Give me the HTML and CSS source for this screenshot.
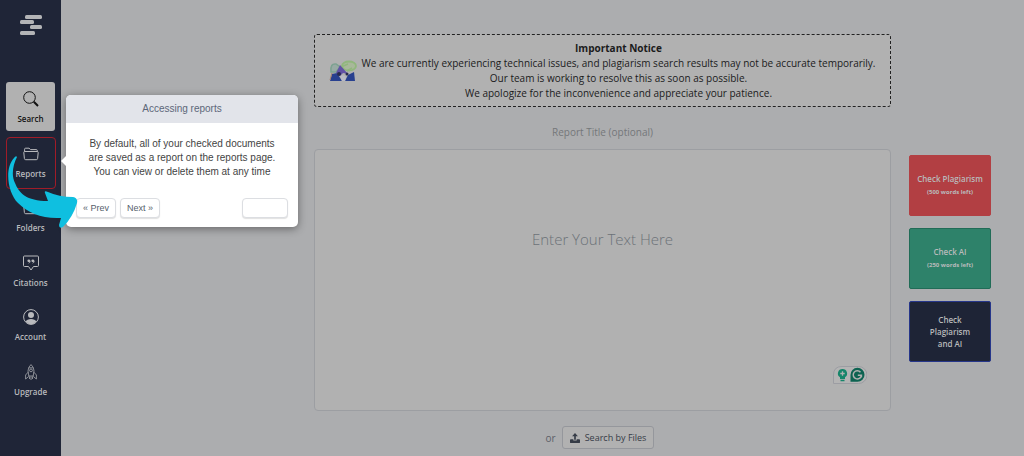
FILE: index.html
```html
<!DOCTYPE html>
<html lang="en">
<head>
<meta charset="utf-8">
<title>Plagiarism search</title>
<link rel="stylesheet" href="styles.css">
</head>
<body>
<div class="app">
  <aside class="sidebar">
    <svg class="logo" viewBox="0 0 24 22" aria-hidden="true">
      <rect x="6" y="1" width="17" height="4" rx="1.5"/><rect x="1" y="6" width="14" height="4" rx="1.5"/>
      <rect x="11" y="11" width="12" height="4" rx="1.5"/><rect x="1" y="17" width="15" height="4" rx="1.5"/>
    </svg>
    <nav class="nav">
      <a class="nav-item active" href="#"><svg viewBox="0 0 16 16"><circle cx="6.5" cy="6.5" r="5.8"/><path d="M10.8 10.8 15 15" stroke-width="2"/></svg><span>Search</span></a>
      <a class="nav-item highlighted" href="#"><svg viewBox="0 0 16 16"><path d="M1.6 5.5V3.2q0-1 1-1H6l1.6 1.4h5.7q1 0 1 1v1M1.7 5.5h12.6q1 0 .9 1l-.6 6q-.1 1.200-1.300 1.200H2.700q-1.200 0-1.300-1.200l-.6-6q-.1-1 .9-1z"/></svg><span>Reports</span></a>
      <a class="nav-item" href="#"><svg viewBox="0 0 16 16"><path d="M1.600 5.500V3.200q0-1 1-1H6l1.600 1.400h5.700q1 0 1 1v1M1.700 5.500h12.600q1 0 .9 1l-.6 6q-.1 1.200-1.300 1.200H2.700q-1.200 0-1.300-1.200l-.6-6q-.1-1 .9-1z"/></svg><span>Folders</span></a>
      <a class="nav-item" href="#"><svg viewBox="0 0 16 16"><path d="M1.500 1h13q1 0 1 1v8.500q0 1-1 1h-4L8 15l-2.500-3.500h-4q-1 0-1-1V2q0-1 1-1z"/><g class="solid"><circle cx="5.800" cy="5.800" r="1.400"/><circle cx="9.800" cy="5.800" r="1.400"/></g><path d="M7.100 5.800q0 1.800-1.300 2.500M11.100 5.800q0 1.800-1.300 2.500"/></svg><span>Citations</span></a>
      <a class="nav-item" href="#"><svg viewBox="0 0 16 16"><circle cx="8" cy="8" r="7.400"/><g class="solid"><circle cx="8" cy="6" r="3"/><path d="M2.600 12.600Q4 10 8 10t5.400 2.600Q11.200 15.300 8 15.300t-5.400-2.700z"/></g></svg><span>Account</span></a>
      <a class="nav-item" href="#"><svg class="thin" viewBox="0 0 16 16"><path d="M8 .6Q5 3 5 7l.8 5h4.400l.8-5q0-4-3-6.400zM6 3.800h4M5.100 8.200 2.600 11v4l3.200-2.600M10.900 8.200l2.500 2.800v4l-3.200-2.600M6.500 12.500v2.500M8 12.500V16M9.500 12.500v2.500"/><circle cx="8" cy="6.400" r="1.400"/></svg><span>Upgrade</span></a>
    </nav>
  </aside>

  <main class="main">
    <section class="content">
      <div class="notice">
        <svg class="notice-art" viewBox="0 0 28 22" aria-hidden="true">
          <path d="M2 12Q1 3 7 4l4 3-4 5z" fill="#98aaa4" stroke="#7da291" stroke-width="1.500"/>
          <ellipse cx="20" cy="6" rx="7" ry="4.500" fill="#a8b89a" stroke="#91b77d" stroke-width="1.800"/>
          <path d="M12 7l7-3M18 11l5-3" stroke="#91b77d" stroke-width="1.500"/>
          <path d="M1 21l2-7 5-1 5 8z" fill="#28408f"/><path d="M16 21l3-6 6-3 1 9z" fill="#28408f"/>
          <path d="M7 13l4-8 8 9-5-1-3 3z" fill="#6152a5"/><circle cx="10" cy="14" r="2" fill="#282a4d"/><circle cx="18" cy="14" r="1.500" fill="#282a4d"/>
          <path d="M11 16q4-2 6 1l-1 4h-3z" fill="#b9bac5"/><path d="M1 20l2-7" stroke="#a3806e"/>
        </svg>
        <div class="notice-text">
          <strong>Important Notice</strong>
          <p>We are currently experiencing technical issues, and plagiarism search results may not be accurate temporarily.</p>
          <p>Our team is working to resolve this as soon as possible.</p>
          <p>We apologize for the inconvenience and appreciate your patience.</p>
        </div>
      </div>
      <input class="report-title" type="text" aria-label="Report title" placeholder="Report Title (optional)">
      <div class="editor">
        <textarea class="editor-text" aria-label="Text to check" placeholder="Enter Your Text Here"></textarea>
        <div class="assistant">
          <svg viewBox="0 0 34 18" aria-hidden="true">
            <path class="assistant-frame" d="M.5 17.500V9Q.5.500 9 .500h16.500a8.500 8.500 0 0 1 0 17z"/>
            <path d="M9.500 3a4.500 4.500 0 0 0-2.500 8.300v1.700h5v-1.700a4.500 4.500 0 0 0-2.500-8.300zM7.500 13.800h4v1.400h-4z" fill="#16856a"/>
            <path d="M9.500 5.300v4.400M7.300 7.500h4.400" stroke="#b1b1b1" stroke-width="1.300"/>
            <path d="M17.500 15.800V9a7 7 0 1 1 7 6.800z" fill="#0d6351"/>
            <path d="M27.500 6.200A4.100 4.100 0 1 0 28.400 9.300H24.800M28.400 9.300v2" fill="none" stroke="#b1b1b1" stroke-width="1.500"/>
          </svg>
        </div>
      </div>
      <div class="file-row">
        <span>or</span>
        <button class="file-button" type="button"><svg viewBox="0 0 12 12" aria-hidden="true"><path d="M6 0 2.500 4H5v4h2V4h2.500zM1 7.500h3V9h4V7.500h3q1 0 1 1V11q0 1-1 1H1q-1 0-1-1V8.500q0-1 1-1z"/></svg>Search by Files</button>
      </div>
    </section>
    <div class="actions">
      <button class="action plagiarism" type="button">Check Plagiarism<small>(500 words left)</small></button>
      <button class="action ai" type="button">Check AI<small>(250 words left)</small></button>
      <button class="action both" type="button">Check Plagiarism and AI</button>
    </div>
  </main>

  <div class="tour" role="dialog" aria-labelledby="tour-title">
    <h2 class="tour-title" id="tour-title">Accessing reports</h2>
    <p class="tour-body">By default, all of your checked documents<br>are saved as a report on the reports page.<br>You can view or delete them at any time</p>
    <div class="tour-nav">
      <button type="button">« Prev</button>
      <button type="button">Next »</button>
      <button class="tour-end" type="button" aria-label="End tour"></button>
    </div>
  </div>
  <svg class="pointer" viewBox="0 0 72 74" aria-hidden="true">
    <path d="M11 2C7 10 5 20 9 28C13 38 20 46 42 46L39 38Q38 35 42 37Q53 42 67 42Q72 43 71 48Q67 62 57 72Q53 74 53 70L55 63C36 64 22 58 12 48C2 38 -2 14 8 3Q10 0 11 2Z"/>
  </svg>
</div>
</body>
</html>
```
FILE: styles.css
```css
* { box-sizing: border-box; }
body { margin: 0; background: #acadaf; font-family: "Open Sans", "Noto Sans", sans-serif; font-size: 10px; color: #1b1b1c; }
button, input, textarea { font: inherit; color: inherit; margin: 0; }
p { margin: 0; }
.app { position: relative; display: flex; min-height: 100vh; overflow: hidden; }

.sidebar { flex: 0 0 61px; background: #1f2537; padding: 14px 6px 0; }
.logo { display: block; width: 24px; height: 22px; margin: 0 auto 46px; fill: #b3b4b6; }
.nav { display: flex; flex-direction: column; justify-content: space-between; min-height: 322px; }
.nav-item { position: relative; display: flex; flex-direction: column; align-items: center; gap: 5px; height: 49px; padding-top: 9px; border-radius: 3px; color: #b9babd; text-decoration: none; font-size: 8px; font-weight: 600; line-height: 14px; }
.nav-item svg { flex: none; width: 16px; height: 16px; fill: none; stroke: currentColor; stroke-width: 1; }
.nav-item .thin { stroke-width: 0.7; }
.nav-item .solid { fill: currentColor; stroke: none; }
.nav-item.active { background: #b1b1b1; color: #111; }
.nav-item.highlighted::after { content: ""; position: absolute; inset: 0 -1px -3px 0; border: 1px solid #a01c28; border-radius: 4px; }

.main { flex: 1; min-width: 0; display: flex; gap: 18px; padding: 34px 33px 0 253px; }
.content { flex: 1; min-width: 0; display: flex; flex-direction: column; }
.notice { display: flex; align-items: center; gap: 12px; min-height: 73px; padding: 0 22px 0 14px; background: #b1b1b1; border: 1px dashed #222; border-radius: 3px; }
.notice-art { flex: none; width: 28px; height: 22px; }
.notice-text { flex: 1; min-width: 0; display: flex; flex-direction: column; align-items: center; line-height: 15px; white-space: nowrap; }
.report-title { width: 100%; height: 24px; margin: 13px 0 5px; padding: 0; border: 0; background: transparent; text-align: center; font-size: 10px; }
.report-title::placeholder { color: #74777a; opacity: 1; }
.editor { position: relative; display: flex; height: 262px; background: #b1b1b1; border: 1px solid #9c9ea2; border-radius: 4px; }
.editor-text { flex: 1; min-width: 0; padding: 78px 0 0; border: 0; background: transparent; text-align: center; font-size: 15px; font-weight: 300; line-height: 22px; resize: none; }
.editor-text::placeholder { color: #6c7278; opacity: 1; }
.assistant { position: absolute; right: 23px; bottom: 26px; width: 34px; height: 18px; }
.assistant svg { display: block; width: 34px; height: 18px; }
.assistant-frame { fill: #b4b4b4; stroke: #9c9da3; }
.file-row { display: flex; justify-content: center; align-items: center; gap: 6px; margin-top: 15px; padding-right: 5px; color: #5c6067; }
.file-button { display: flex; align-items: center; gap: 5px; height: 23px; padding: 0 7px; background: #b1b1b1; border: 1px solid #95979c; border-radius: 3px; color: #363c47; font-size: 9px; }
.file-button svg { width: 10px; height: 10px; fill: currentColor; }

.actions { flex: 0 0 82px; display: flex; flex-direction: column; gap: 12px; padding-top: 121px; }
.action { height: 61px; padding: 0 6px; border: 1px solid; border-radius: 2px; color: #b9babb; font-size: 8px; font-weight: 600; line-height: 12px; }
.action small { display: block; font-size: 6px; font-weight: 700; line-height: 14px; }
.plagiarism { background: #b23f43; border-color: #b23f43; }
.ai { background: #2e826a; border-color: #216c57; }
.both { background: #1e2436; border-color: #26368a; padding: 0 18px; }

.tour { position: absolute; left: 66px; top: 95px; width: 232px; background: #fff; border-radius: 5px; box-shadow: 0 2px 8px rgba(0, 0, 0, 0.4); font-family: "Liberation Sans", Arial, sans-serif; font-size: 10px; color: #444; }
.tour::before { content: ""; position: absolute; left: -5px; top: 61px; border: 5px solid transparent; border-left-width: 0; border-right-color: #fff; }
.tour-title { margin: 0; background: #e2e4ea; border-radius: 5px 5px 0 0; color: #5d6779; text-align: center; font-size: 10px; font-weight: 400; line-height: 28px; }
.tour-body { padding: 14px 10px 0; text-align: center; line-height: 14px; }
.tour-nav { display: flex; gap: 4px; padding: 19px 10px 9px; }
.tour-nav button { height: 20px; padding: 0 6px; background: #fff; border: 1px solid #dcdee2; border-radius: 4px; box-shadow: 0 1px 1px rgba(0, 0, 0, 0.12); color: #56616c; font-size: 9px; }
.tour-nav .tour-end { width: 46px; margin-left: auto; }

.pointer { position: absolute; left: 6px; top: 155px; width: 72px; height: 74px; fill: #0fbfe0; }
```
